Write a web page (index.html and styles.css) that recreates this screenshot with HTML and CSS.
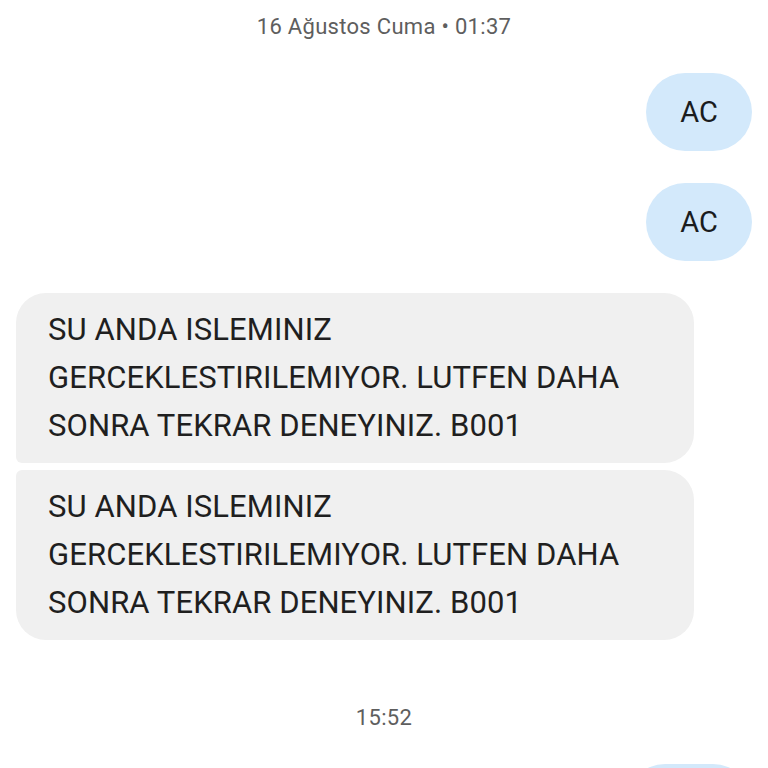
FILE: index.html
```html
<!DOCTYPE html>
<html lang="tr">
<head>
  <meta charset="UTF-8" />
  <title>Mesajlar</title>
  <meta name="viewport" content="width=device-width, initial-scale=1.0" />
  <link rel="stylesheet" href="styles.css">
</head>
<body>
  <div class="thread">
    <div class="stamp stamp-top">16 Ağustos Cuma • 01:37</div>

    <div class="msg out">AC</div>
    <div class="msg out">AC</div>

    <div class="group in-group">
      <div class="msg in first">SU ANDA ISLEMINIZ GERCEKLESTIRILEMIYOR. LUTFEN DAHA SONRA TEKRAR DENEYINIZ. B001</div>
      <div class="msg in last">SU ANDA ISLEMINIZ GERCEKLESTIRILEMIYOR. LUTFEN DAHA SONRA TEKRAR DENEYINIZ. B001</div>
    </div>

    <div class="stamp stamp-mid">15:52</div>

    <!-- next outgoing bubble, only its top edge shows -->
    <div class="msg out next"></div>
  </div>
</body>
</html>
```

FILE: styles.css
```css
/* RESET */
* { box-sizing: border-box; margin: 0; padding: 0; }
html, body { width: 100%; height: 100%; overflow: hidden; }

body {
  background: #ffffff;
  font-family: Roboto, "Noto Sans", Arial, sans-serif;
  color: #1f1f1f;
}

/* THREAD COLUMN */
.thread {
  display: flex;
  flex-direction: column;
  padding: 0 16px;
}

/* TIME STAMPS */
.stamp {
  align-self: center;
  font-size: 22px;
  letter-spacing: 0.3px;
  color: #5e5e5e;
  line-height: 28px;
}
.stamp-top { margin-top: 13px; margin-bottom: 32px; }
.stamp-mid { margin-top: 64px; margin-bottom: 32px; }

/* BUBBLES */
.msg {
  max-width: 678px;
}
.msg.out {
  align-self: flex-end;
  height: 78px;
  padding: 0 34px;
  display: flex;
  align-items: center;
  border-radius: 39px;
  background: #d3e9fb;
  font-size: 29px;
  color: #1a1c1e;
  margin-bottom: 32px;
}
.msg.out.next { width: 126px; margin-bottom: 0; }

.in-group {
  display: flex;
  flex-direction: column;
  gap: 7px;
  align-items: flex-start;
}
.msg.in {
  width: 678px;
  background: #f0f0f0;
  padding: 13px 32px;
  font-size: 31px;
  line-height: 48px;
  letter-spacing: 0.1px;
  border-radius: 30px;
}
.msg.in.first { border-bottom-left-radius: 6px; }
.msg.in.last { border-top-left-radius: 6px; }
```
